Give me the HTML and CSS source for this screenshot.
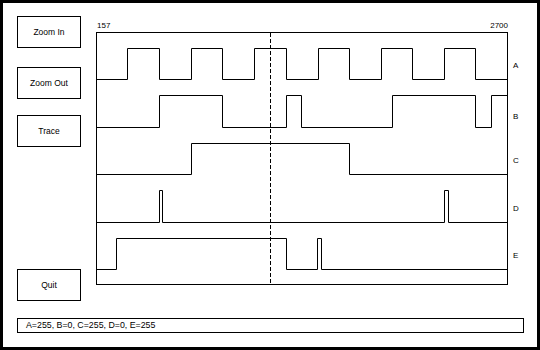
FILE: index.html
```html
<!DOCTYPE html>
<html lang="en">
<head>
    <meta charset="UTF-8">
    <title>Logic Trace</title>
    <link rel="stylesheet" href="styles.css">
</head>
<body>
    <div class="janela">
        <div class="linha">
            <!-- Botões à esquerda -->
            <div class="lateral">
                <button class="botao">Zoom In</button>
                <button class="botao botao-out">Zoom Out</button>
                <button class="botao botao-trace">Trace</button>
                <button class="botao botao-quit">Quit</button>
            </div>

            <!-- Área do gráfico (coordenadas iguais às da janela) -->
            <svg class="grafico" width="440" height="285" viewBox="88 16 440 285">
                <text class="rotulo" x="97" y="28">157</text>
                <text class="rotulo" x="508" y="28" text-anchor="end">2700</text>

                <rect class="moldura" x="96.5" y="32.5" width="411" height="252"/>

                <!-- A -->
                <polyline class="sinal" points="96.5,79.5 127.5,79.5 127.5,48.5 159.5,48.5 159.5,79.5 191.5,79.5 191.5,48.5 222.5,48.5 222.5,79.5 254.5,79.5 254.5,48.5 286.5,48.5 286.5,79.5 318.5,79.5 318.5,48.5 349.5,48.5 349.5,79.5 381.5,79.5 381.5,48.5 412.5,48.5 412.5,79.5 444.5,79.5 444.5,48.5 475.5,48.5 475.5,79.5 507.5,79.5"/>
                <!-- B -->
                <polyline class="sinal" points="96.5,127.5 159.5,127.5 159.5,95.5 222.5,95.5 222.5,127.5 286.5,127.5 286.5,95.5 301.5,95.5 301.5,127.5 392.5,127.5 392.5,95.5 475.5,95.5 475.5,127.5 491.5,127.5 491.5,95.5 507.5,95.5"/>
                <!-- C -->
                <polyline class="sinal" points="96.5,174.5 191.5,174.5 191.5,143.5 349.5,143.5 349.5,174.5 507.5,174.5"/>
                <!-- D -->
                <polyline class="sinal" points="96.5,222.5 159.5,222.5 159.5,190.5 162.5,190.5 162.5,222.5 444.5,222.5 444.5,190.5 448.5,190.5 448.5,222.5 507.5,222.5"/>
                <!-- E -->
                <polyline class="sinal" points="96.5,269.5 116.5,269.5 116.5,238.5 286.5,238.5 286.5,269.5 317.5,269.5 317.5,238.5 321.5,238.5 321.5,269.5 507.5,269.5"/>

                <!-- cursor -->
                <line class="cursor" x1="270.5" y1="33" x2="270.5" y2="285"/>

                <text class="rotulo" x="513" y="68">A</text>
                <text class="rotulo" x="513" y="118.5">B</text>
                <text class="rotulo" x="513" y="163">C</text>
                <text class="rotulo" x="513" y="210.5">D</text>
                <text class="rotulo" x="513" y="258">E</text>
            </svg>
        </div>

        <div class="status">A=255, B=0, C=255, D=0, E=255</div>
    </div>
</body>
</html>
```

FILE: styles.css
```css
body {
    margin: 0;
    background-color: #fff;
    font-family: "Liberation Sans", Arial, sans-serif;
    color: #000;
}

.janela {
    width: 540px;
    height: 350px;
    box-sizing: border-box;
    border: 3px solid #000; /* borda preta da janela */
    padding: 13px 0 0 14px;
}

.linha {
    display: flex;
    height: 285px;
}

.lateral {
    display: flex;
    flex-direction: column;
    width: 64px;
}

.botao {
    width: 64px;
    height: 32px;
    box-sizing: border-box;
    border: 1px solid #000;
    background-color: #fff;
    font-family: "Liberation Sans", Arial, sans-serif;
    font-size: 8.5px;
    color: #000;
    padding: 0;
}

.botao-out {
    margin-top: 19px;
}

.botao-trace {
    margin-top: 16px;
}

.botao-quit {
    margin-top: auto;
}

.grafico {
    display: block;
    margin-left: 7px;
}

.rotulo {
    font-family: "Liberation Sans", Arial, sans-serif;
    font-size: 8px;
    fill: #000;
}

.moldura,
.sinal {
    fill: none;
    stroke: #000;
    stroke-width: 1;
}

.cursor {
    stroke: #000;
    stroke-width: 1;
    stroke-dasharray: 4 2;
}

.status {
    margin-top: 17px;
    width: 507px;
    height: 15px;
    box-sizing: border-box;
    border: 1px solid #000;
    padding-left: 8px;
    font-size: 8.8px;
    line-height: 13px;
}
```
